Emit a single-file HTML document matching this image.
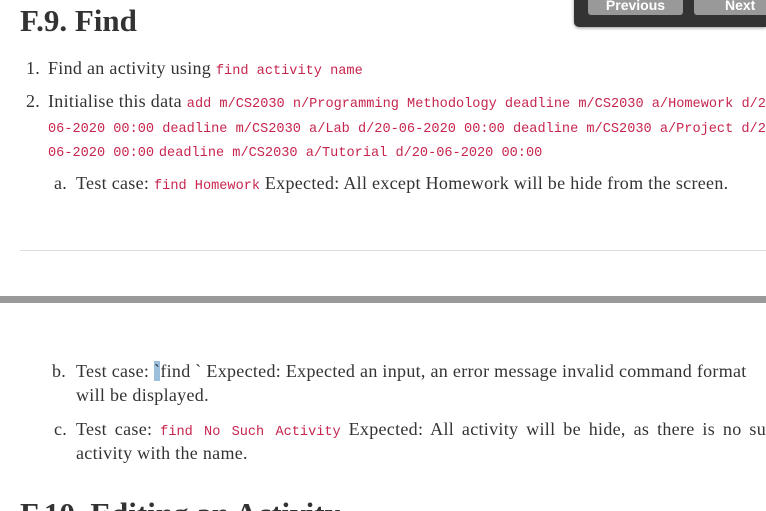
<!DOCTYPE html>
<html><head><meta charset="utf-8"><style>
html,body{margin:0;padding:0;width:766px;height:511px;overflow:hidden;background:#fff;position:relative}
body{font-family:"Liberation Serif","DejaVu Serif",serif;color:#333;font-size:18px;letter-spacing:0.3px}
.l{position:absolute;white-space:nowrap;line-height:24px;height:24px;overflow:hidden;right:0}
.j{text-align:justify;text-align-last:justify;white-space:normal;right:auto}
code{font-family:"Liberation Mono","DejaVu Sans Mono",monospace;color:#c7254e;font-size:13.6px;letter-spacing:0}
h1{position:absolute;margin:0;font-size:31px;font-weight:bold;line-height:36px;color:#333;white-space:nowrap;letter-spacing:0}
.num{position:absolute;line-height:24px}
</style></head><body>
<div style="position:absolute;left:574px;top:-6px;width:192px;height:33px;background:#333;border-radius:5px 0 0 5px;box-shadow:0 1px 3px rgba(0,0,0,.4)"></div>
<div style="position:absolute;left:588px;top:-6px;width:95px;height:21px;background:#999;border-radius:3px;color:#fff;font-family:'Liberation Sans',sans-serif;font-weight:bold;font-size:14px;text-align:center;line-height:22px;letter-spacing:0">Previous</div>
<div style="position:absolute;left:694px;top:-6px;width:72px;height:21px;background:#999;border-radius:3px 0 0 3px;color:#fff;font-family:'Liberation Sans',sans-serif;font-weight:bold;font-size:14px;line-height:22px;letter-spacing:0"><span style="position:absolute;left:31px">Next</span></div>

<h1 style="left:20px;top:3px">F.9. Find</h1>

<div class="num" style="left:26px;top:56px">1.</div>
<div class="l" style="left:48px;top:56px">Find an activity using <code>find activity name</code></div>

<div class="num" style="left:26px;top:89px">2.</div>
<div class="l" style="left:48px;top:89px">Initialise this data <code>add m/CS2030 n/Programming Methodology deadline m/CS2030 a/Homework d/2</code></div>
<div class="l" style="left:48px;top:114px"><code>06-2020 00:00 deadline m/CS2030 a/Lab d/20-06-2020 00:00 deadline m/CS2030 a/Project d/2</code></div>
<div class="l" style="left:48px;top:138px"><code>06-2020 00:00</code> <code>deadline m/CS2030 a/Tutorial d/20-06-2020 00:00</code></div>

<div class="num" style="left:54px;top:171px">a.</div>
<div class="l" style="left:76px;top:171px">Test case: <code>find Homework</code> Expected: All except Homework will be hide from the screen.</div>

<div style="position:absolute;left:20px;top:250px;width:746px;height:1px;background:#ddd"></div>
<div style="position:absolute;left:0;top:296px;width:766px;height:7px;background:#999"></div>

<div class="num" style="left:52px;top:359px">b.</div>
<div class="l" style="left:76px;top:359px">Test case: <span style="background:#9cbfdc">`</span>find ` Expected: Expected an input, an error message invalid command format</div>
<div class="l" style="left:76px;top:383px">will be displayed.</div>

<div class="num" style="left:54px;top:417px">c.</div>
<div class="l j" style="left:76px;top:417px;width:690px">Test case: <code>find No Such Activity</code> Expected: All activity will be hide, as there is no su</div>
<div class="l" style="left:76px;top:441px">activity with the name.</div>

<h1 style="left:20px;top:496px">F.10. Editing an Activity</h1>
</body></html>
